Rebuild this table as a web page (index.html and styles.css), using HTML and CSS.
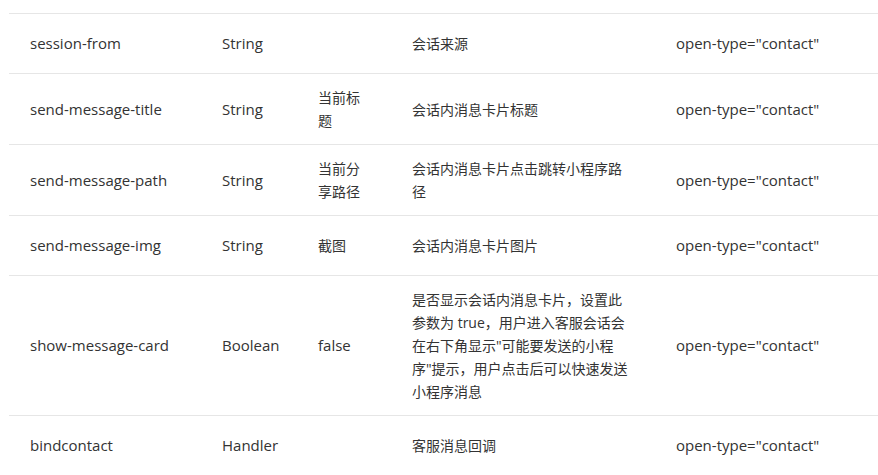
FILE: index.html
```html
<!DOCTYPE html>
<html lang="zh">
<head>
<meta charset="utf-8">
<link rel="stylesheet" href="styles.css">
</head>
<body>
<div class="wrap">
<table class="props">
  <colgroup>
    <col class="c1"><col class="c2"><col class="c3"><col class="c4"><col class="c5">
  </colgroup>
  <tbody>
    <tr><td class="en">session-from</td><td class="en">String</td><td></td><td>会话来源</td><td class="en">open-type="contact"</td></tr>
    <tr><td class="en">send-message-title</td><td class="en">String</td><td>当前标题</td><td>会话内消息卡片标题</td><td class="en">open-type="contact"</td></tr>
    <tr><td class="en">send-message-path</td><td class="en">String</td><td>当前分享路径</td><td>会话内消息卡片点击跳转小程序路径</td><td class="en">open-type="contact"</td></tr>
    <tr><td class="en">send-message-img</td><td class="en">String</td><td>截图</td><td>会话内消息卡片图片</td><td class="en">open-type="contact"</td></tr>
    <tr><td class="en">show-message-card</td><td class="en">Boolean</td><td class="en">false</td><td>是否显示会话内消息卡片，设置此参数为 true，用户进入客服会话会在右下角显示"可能要发送的小程序"提示，用户点击后可以快速发送小程序消息</td><td class="en">open-type="contact"</td></tr>
    <tr><td class="en">bindcontact</td><td class="en">Handler</td><td></td><td>客服消息回调</td><td class="en">open-type="contact"</td></tr>
  </tbody>
</table>
</div>
</body>
</html>
```
FILE: styles.css
```css
html, body {
  margin: 0;
  padding: 0;
  background: #fff;
  overflow: hidden;
}
.wrap {
  padding: 13px 0 0 9px;
  width: 900px;
}
.props {
  border-collapse: collapse;
  table-layout: fixed;
  width: 900px;
  font-family: "Open Sans", "Noto Sans CJK SC", sans-serif;
  font-size: 14px;
  line-height: 23px;
  color: #333;
}
.c1 { width: 192px; }
.c2 { width: 96px; }
.c3 { width: 94px; }
.c4 { width: 264px; }
.c5 { width: 254px; }
.props td {
  border-top: 1px solid #e6e6e6;
  padding: 12px 21px;
  height: 35px;
  vertical-align: middle;
  word-break: break-all;
}
.props td.en {
  font-size: 15px;
  white-space: nowrap;
  word-break: normal;
}
```
